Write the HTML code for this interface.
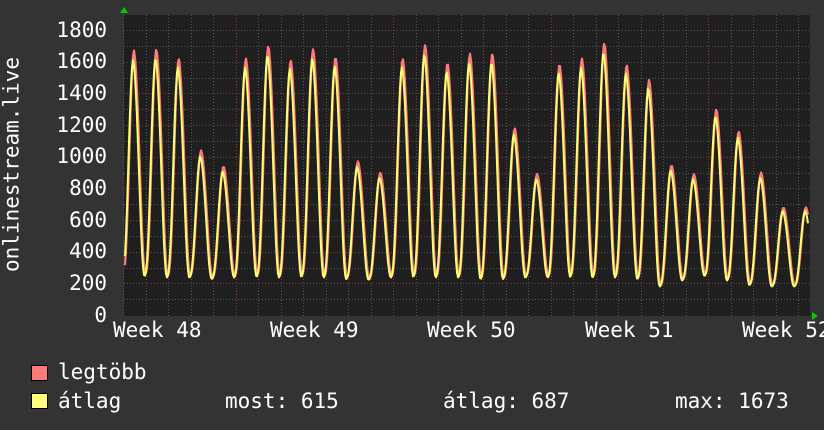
<!DOCTYPE html>
<html><head><meta charset="utf-8"><style>
html,body{margin:0;padding:0;background:#333333;}
body{width:824px;height:430px;overflow:hidden;position:relative;font-family:"DejaVu Sans Mono","Liberation Mono",monospace;color:#fff;}
.t{position:absolute;font-size:21px;line-height:21px;white-space:pre;}
.yl{position:absolute;right:717px;font-size:21px;line-height:21px;}
.box{position:absolute;width:15px;height:14px;border:1px solid #000;}
</style></head><body>
<svg id="g" width="824" height="430" style="position:absolute;left:0;top:0">
<rect x="124" y="15" width="686" height="301" fill="#1f1f1f"/>
<g id="grid"></g>
<path id="pmax" fill="none" stroke="#ff7b7b" stroke-width="2.2" stroke-linejoin="round"/>
<path id="pavg" fill="none" stroke="#ffff70" stroke-width="2" stroke-linejoin="round"/>
<polygon points="120,13 124,7 128,13" fill="#00cc00"/>
<polygon points="812,312 818,316 812,320" fill="#00cc00"/>
</svg>
<div class="t" style="left:-98px;top:154px;width:220px;text-align:center;transform:rotate(-90deg);">onlinestream.live</div>
<div class="yl" style="top:20px">1800</div>
<div class="yl" style="top:51px">1600</div>
<div class="yl" style="top:83px">1400</div>
<div class="yl" style="top:115px">1200</div>
<div class="yl" style="top:146px">1000</div>
<div class="yl" style="top:178px">800</div>
<div class="yl" style="top:210px">600</div>
<div class="yl" style="top:241px">400</div>
<div class="yl" style="top:273px">200</div>
<div class="yl" style="top:305px">0</div>
<div class="t" style="left:113px;top:320px">Week 48</div>
<div class="t" style="left:270px;top:320px">Week 49</div>
<div class="t" style="left:427px;top:320px">Week 50</div>
<div class="t" style="left:585px;top:320px">Week 51</div>
<div class="t" style="left:742px;top:320px">Week 52</div>
<div class="box" style="left:31px;top:365px;background:#ff7b7b"></div>
<div class="box" style="left:31px;top:393px;background:#ffff7b"></div>
<div class="t" style="left:58px;top:362px">legtöbb</div>
<div class="t" style="left:58px;top:391px">átlag</div>
<div class="t" style="left:225px;top:391px">most: 615</div>
<div class="t" style="left:443px;top:391px">átlag: 687</div>
<div class="t" style="left:675px;top:391px">max: 1673</div>
<script>
var ns="http://www.w3.org/2000/svg",G=document.getElementById('grid');
function ln(x1,y1,x2,y2,c){var l=document.createElementNS(ns,'line');l.setAttribute('x1',x1);l.setAttribute('y1',y1);l.setAttribute('x2',x2);l.setAttribute('y2',y2);l.setAttribute('stroke',c);l.setAttribute('stroke-dasharray','1,2');l.setAttribute('stroke-width','1');G.appendChild(l);}
function Y(v){return 315-v*0.1583;}
for(var v=100;v<=1800;v+=100){var y=Math.round(Y(v))+0.5;ln(124,y,810,y,v%200==0?'#7a3f3f':'#555');}
for(var k=0;k<31;k++){var x=Math.round(123.3+22.5*k)+0.5;if(x>810)break;ln(x,15,x,318,(k%7==5)?'#8a3a3a':'#555');}
var pk=[1670,1680,1620,1040,940,1620,1700,1610,1680,1630,970,900,1620,1705,1593,1650,1650,1181,891,1585,1620,1718,1580,1485,947,890,1300,1160,900,680,680];
var tr=[250,260,250,250,240,250,255,250,255,250,240,235,250,255,250,250,240,240,250,250,255,250,250,240,190,230,260,230,200,190,190];
function val(x,s){var k=Math.round((x-134)/22.4);if(k<0)k=0;if(k>30)k=30;var xp=134+22.4*k,d=x-xp;
var t=(d<0)?tr[k]:tr[Math.min(k+1,30)];var p=pk[k]*s;t=t*(s<1?0.95:1);
var a=Math.abs(d)/11.2;if(a>1)a=1;var g;
if(d<0){g=Math.pow((1+Math.cos(Math.PI*a))/2,1.3);}else{g=Math.pow((1+Math.cos(Math.PI*a))/2,0.9);g=g*0.85+0.15*Math.max(0,1-a*1.3);}
return t+(p-t)*g;}
function path(s,off){var d='';for(var x=125;x<=808;x+=1){var v=val(x-off,s);d+=(x==125?'M':'L')+x+','+Y(v).toFixed(1);}return d;}
document.getElementById('pmax').setAttribute('d',path(1,0));
document.getElementById('pavg').setAttribute('d',path(0.965,-0.8));
</script>
</body></html>
